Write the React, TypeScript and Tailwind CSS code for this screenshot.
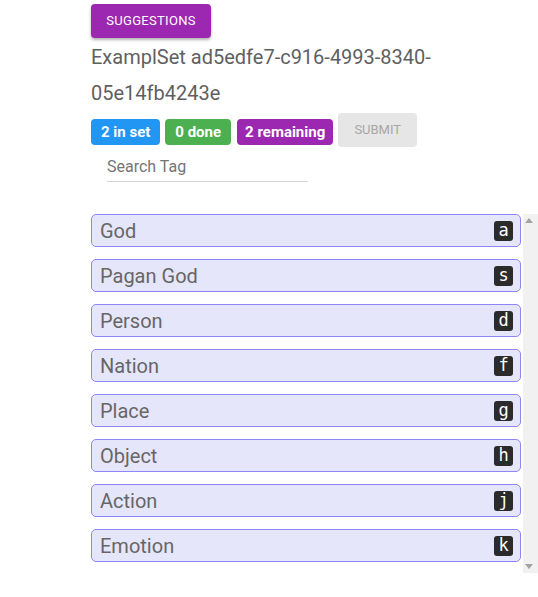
import React from "react";

const tags: [string, string][] = [
  ["God", "a"],
  ["Pagan God", "s"],
  ["Person", "d"],
  ["Nation", "f"],
  ["Place", "g"],
  ["Object", "h"],
  ["Action", "j"],
  ["Emotion", "k"],
];

export default function App() {
  return (
    <div className="w-[538px] h-[597px] bg-white overflow-hidden" style={{ fontFamily: "Roboto, 'Liberation Sans', sans-serif" }}>
      <div className="pl-[91px] pt-[4px]">
        <button className="h-[34px] w-[120px] rounded-[4px] bg-[#9c27b0] text-white text-[13px] uppercase tracking-[0.3px] shadow-[0_2px_3px_rgba(0,0,0,0.3)]">
          Suggestions
        </button>
        <div className="w-[350px] mt-[1px] text-[20px] leading-[36px] text-[#5f5f5f]">
          ExamplSet ad5edfe7-c916-4993-8340-05e14fb4243e
        </div>
        <div className="flex items-center mt-[2px] h-[34px]">
          <span className="h-[26px] px-[10px] flex items-center rounded-[4px] bg-[#2196f3] text-white text-[15px] font-bold mt-[4px]">2 in set</span>
          <span className="ml-[5px] h-[26px] px-[10px] flex items-center rounded-[4px] bg-[#4caf50] text-white text-[15px] font-bold mt-[4px]">0 done</span>
          <span className="ml-[6px] h-[26px] px-[8px] flex items-center rounded-[4px] bg-[#9c27b0] text-white text-[15px] font-bold mt-[4px]">2 remaining</span>
          <button className="ml-[5px] h-[34px] w-[79px] rounded-[4px] bg-[#e6e6e6] text-[#a6a6a6] text-[13px] uppercase">Submit</button>
        </div>
        <div className="ml-[16px] mt-[3px] w-[201px] h-[32px] border-b border-[#d5d5d5] flex items-center pt-[3px]">
          <input
            placeholder="Search Tag"
            className="w-full bg-transparent outline-none text-[16px] text-[#757575] placeholder:text-[#757575]"
          />
        </div>
        <div className="mt-[32px] h-[359px] flex">
          <div className="w-[434px] flex flex-col gap-[12px] overflow-hidden">
            {tags.map(([name, key]) => (
              <div
                key={key}
                className="shrink-0 h-[33px] rounded-[5px] border border-[#8f86f6] bg-[#e6e6fa] flex items-center justify-between pl-[8px] pr-[7px]"
              >
                <span className="text-[20px] text-[#666666]">{name}</span>
                <span
                  className="w-[19px] h-[20px] rounded-[3px] bg-[#2b2b2b] text-white text-[17px] flex items-center justify-center"
                  style={{ fontFamily: "'DejaVu Sans Mono', 'Liberation Mono', monospace" }}
                >
                  {key}
                </span>
              </div>
            ))}
          </div>
          <div className="ml-[2px] w-[15px] bg-[#f1f1f1] flex flex-col justify-between items-start pl-[2px] py-[4px]">
            <svg width="8" height="5" viewBox="0 0 8 5"><path d="M0 5 L4 0 L8 5 Z" fill="#a3a3a3" /></svg>
            <svg width="8" height="5" viewBox="0 0 8 5"><path d="M0 0 L4 5 L8 0 Z" fill="#a3a3a3" /></svg>
          </div>
        </div>
      </div>
    </div>
  );
}
